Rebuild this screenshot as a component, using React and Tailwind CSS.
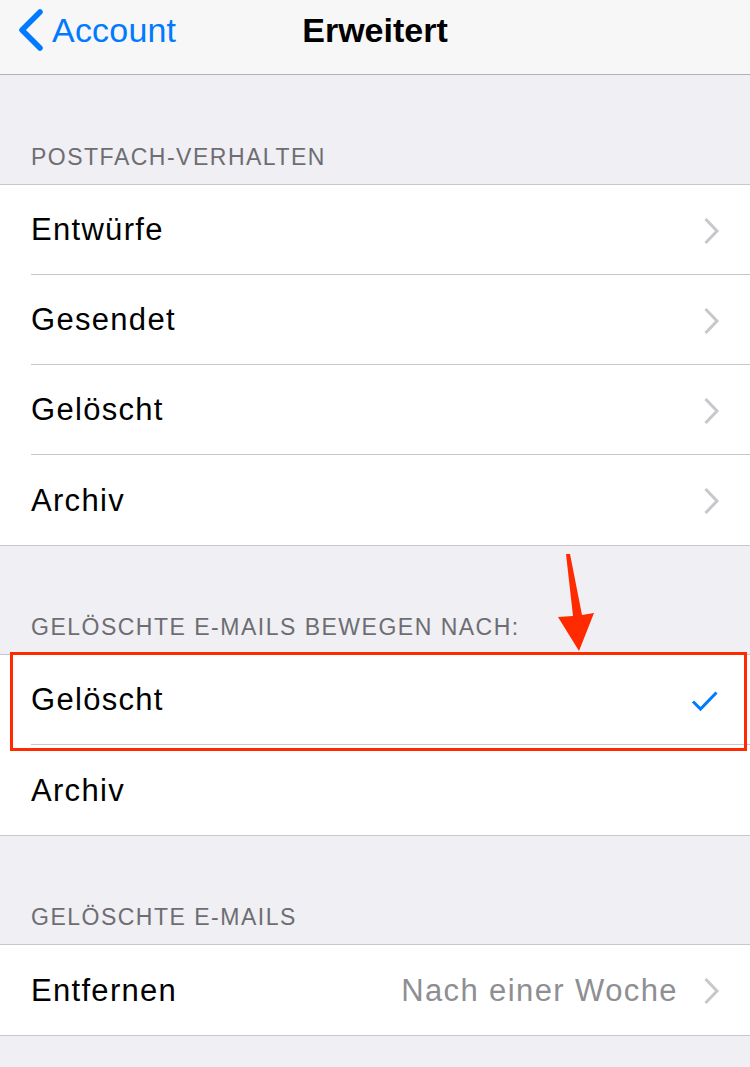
const font = { fontFamily: '"Liberation Sans", Arial, sans-serif' }

function Chevron() {
  return (
    <svg width="17" height="28" viewBox="0 0 17 28" className="shrink-0">
      <path d="M2.5 2 L14 14 L2.5 26" fill="none" stroke="#c7c7cc" strokeWidth="3" />
    </svg>
  )
}

function Row({ label, value, chevron, check, last }) {
  return (
    <div className="flex h-[90px] items-center pl-[31px]">
      <div className={`flex h-full flex-1 items-center pr-[30px] pt-[2px] ${last ? '' : 'border-b border-[#c8c7cc]'}`}>
        <span className="flex-1 text-[31px] tracking-[1.3px] text-black">{label}</span>
        {value && <span className="mr-[25px] text-[31px] tracking-[1.4px] text-[#8e8e93]">{value}</span>}
        {chevron && <Chevron />}
        {check && (
          <svg width="28" height="22" viewBox="0 0 28 22" className="mr-[1px]">
            <path d="M2 11.5 L9.5 19 L25.5 2.5" fill="none" stroke="#007aff" strokeWidth="3" />
          </svg>
        )}
      </div>
    </div>
  )
}

function Group({ title, children }) {
  return (
    <div>
      <div className="pb-[14px] pl-[31px] pt-[68px] text-[23px] leading-[28px] tracking-[1.5px] text-[#6d6d72]">{title}</div>
      <div className="bg-white shadow-[0_-1px_0_#c8c7cc,0_1px_0_#c8c7cc]">{children}</div>
    </div>
  )
}

export default function App() {
  return (
    <div className="relative h-[1067px] w-[750px] overflow-hidden bg-[#efeff4]" style={font}>
      <div className="relative flex h-[75px] items-center border-b border-[#b2b2b2] bg-[#f7f7f7] pb-[14px]">
        <div className="flex items-center pl-[16px] text-[#007aff]">
          <svg width="30" height="44" viewBox="0 0 30 44">
            <path d="M24 4 L6 22 L24 40" fill="none" stroke="#007aff" strokeWidth="5.5" strokeLinecap="round" strokeLinejoin="round" />
          </svg>
          <span className="ml-[6px] text-[34px] tracking-[0.2px]">Account</span>
        </div>
        <div className="pointer-events-none absolute inset-x-0 text-center text-[34px] font-bold text-black">Erweitert</div>
      </div>

      <Group title="POSTFACH-VERHALTEN">
        <Row label="Entwürfe" chevron />
        <Row label="Gesendet" chevron />
        <Row label="Gelöscht" chevron />
        <Row label="Archiv" chevron last />
      </Group>

      <Group title="GELÖSCHTE E-MAILS BEWEGEN NACH:">
        <Row label="Gelöscht" check />
        <Row label="Archiv" last />
      </Group>

      <Group title="GELÖSCHTE E-MAILS">
        <Row label="Entfernen" value="Nach einer Woche" chevron last />
      </Group>

      {/* red highlight frame with pointer arrow */}
      <div className="absolute left-[10px] top-[652px] h-[99px] w-[737px] border-[3px] border-[#ff2a00]" />
      <svg className="absolute left-[540px] top-[545px]" width="60" height="110" viewBox="0 0 60 110">
        <path d="M26 9 L30 9 L42 70 L54 68 L39 106 L18 72 L33 71 Z" fill="#ff2a00" strokeLinejoin="round" />
      </svg>
    </div>
  )
}
